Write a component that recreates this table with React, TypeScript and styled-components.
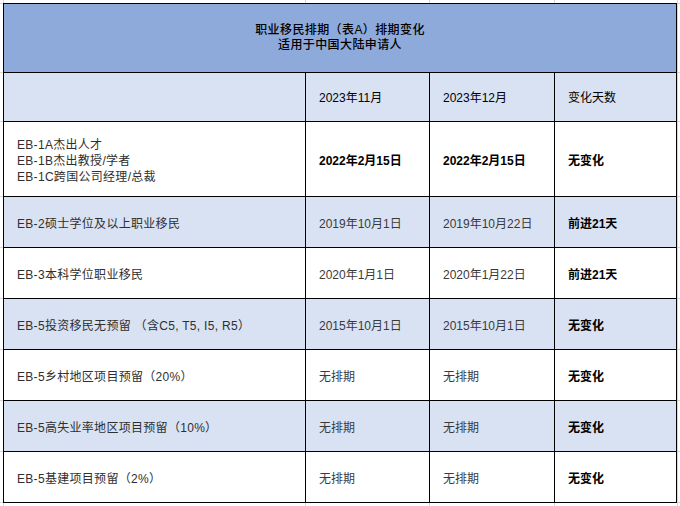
import React from "react";
import styled, { createGlobalStyle } from "styled-components";

const Global = createGlobalStyle`
  html, body { margin: 0; padding: 0; background: #fff; }
  body { font-family: "Liberation Sans", "Noto Sans CJK SC", sans-serif; }
`;

const xs = [3, 305, 429, 554, 677];
const ys = [3, 72, 121, 196, 247, 298, 349, 400, 451, 502];
const gridBg = [
  ...xs.map((x) => `linear-gradient(to right, transparent ${x}px, #d6d6d6 ${x}px, #d6d6d6 ${x + 1}px, transparent ${x + 1}px)`),
  ...ys.map((y) => `linear-gradient(to bottom, transparent ${y}px, #d6d6d6 ${y}px, #d6d6d6 ${y + 1}px, transparent ${y + 1}px)`),
].join(", ");

const Page = styled.div`
  width: 680px;
  height: 506px;
  box-sizing: border-box;
  padding: 3px 0 0 3px;
  background-color: #fff;
  overflow: hidden;
`;

const Grid = styled.div`
  display: grid;
  grid-template-columns: 301px 123px 124px 121px;
  grid-template-rows: 68px 48px 74px repeat(6, 50px);
  gap: 1px;
  padding: 1px;
  background: #000;
  width: max-content;
`;

const TitleCell = styled.div`
  grid-column: 1 / -1;
  background: #8eaadb;
  display: flex;
  flex-direction: column;
  align-items: center;
  justify-content: center;
  font-family: "Liberation Sans", "Noto Sans CJK SC", sans-serif;
  font-size: 12px;
  font-weight: 500;
  line-height: 15px;
  letter-spacing: 0.4px;
  color: #000;
`;

const Cell = styled.div<{ $shade?: boolean; $strong?: boolean; $dark?: boolean }>`
  background: ${(p) => (p.$shade ? "#d9e2f3" : "#fff")};
  display: flex;
  flex-direction: column;
  justify-content: center;
  padding: 3px 0 0 13px;
  font-size: 12px;
  line-height: 16px;
  color: ${(p) => (p.$strong || p.$dark ? "#000" : "#3a3a3a")};
  font-weight: ${(p) => (p.$strong ? 700 : 400)};
  white-space: nowrap;
`;

const LabelCell = styled(Cell)`
  letter-spacing: 0.3px;
  color: #2f2f2f;
`;

const HeadCell = styled(Cell)`
  padding-top: 1px;
  color: #000;
`;

type Row = { label: string[]; a: string; b: string; c: string; strongDates?: boolean };

const rows: Row[] = [
  { label: ["EB-1A杰出人才", "EB-1B杰出教授/学者", "EB-1C跨国公司经理/总裁"], a: "2022年2月15日", b: "2022年2月15日", c: "无变化", strongDates: true },
  { label: ["EB-2硕士学位及以上职业移民"], a: "2019年10月1日", b: "2019年10月22日", c: "前进21天" },
  { label: ["EB-3本科学位职业移民"], a: "2020年1月1日", b: "2020年1月22日", c: "前进21天" },
  { label: ["EB-5投资移民无预留  （含C5, T5, I5, R5）"], a: "2015年10月1日", b: "2015年10月1日", c: "无变化" },
  { label: ["EB-5乡村地区项目预留（20%）"], a: "无排期", b: "无排期", c: "无变化" },
  { label: ["EB-5高失业率地区项目预留（10%）"], a: "无排期", b: "无排期", c: "无变化" },
  { label: ["EB-5基建项目预留（2%）"], a: "无排期", b: "无排期", c: "无变化" },
];

export default function App() {
  return (
    <>
      <Global />
      <Page style={{ backgroundImage: gridBg }}>
        <Grid>
          <TitleCell>
            <span>职业移民排期（表A）排期变化</span>
            <span>适用于中国大陆申请人</span>
          </TitleCell>
          <HeadCell $shade />
          <HeadCell $shade>2023年11月</HeadCell>
          <HeadCell $shade>2023年12月</HeadCell>
          <HeadCell $shade>变化天数</HeadCell>
          {rows.map((r, i) => {
            const shade = i % 2 === 1;
            return (
              <React.Fragment key={i}>
                <LabelCell $shade={shade}>
                  {r.label.map((l) => (
                    <span key={l}>{l}</span>
                  ))}
                </LabelCell>
                <Cell $shade={shade} $strong={r.strongDates}>{r.a}</Cell>
                <Cell $shade={shade} $strong={r.strongDates}>{r.b}</Cell>
                <Cell $shade={shade} $strong>{r.c}</Cell>
              </React.Fragment>
            );
          })}
        </Grid>
      </Page>
    </>
  );
}
